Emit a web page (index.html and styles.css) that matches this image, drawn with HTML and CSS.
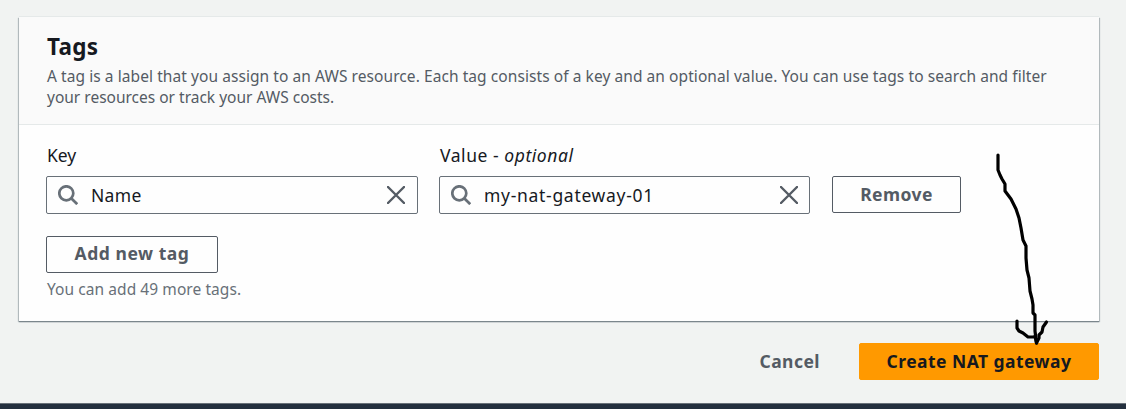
FILE: index.html
```html
<!DOCTYPE html>
<html lang="en">
<head>
<meta charset="utf-8">
<title>Create NAT gateway</title>
<link rel="stylesheet" href="styles.css">
</head>
<body>
<main class="page">
  <section class="panel">
    <header class="panel-header">
      <h2 class="title"><span>Tags</span></h2>
      <p class="description"><span class="desc-first">A tag is a label that you assign to an AWS resource. Each tag consists of a key and an optional value. You can use tags to search and filter</span><br><span class="desc-second">your resources or track your AWS costs.</span></p>
    </header>
    <div class="panel-body">
      <div class="tag-row">
        <div class="field">
          <label class="label label-key">Key</label>
          <div class="input">
            <svg class="search" viewBox="0 0 20 20"><circle cx="8.3" cy="8.3" r="7"/><path d="M13.2 13.2 19.2 19.2"/></svg>
            <span class="value value-key">Name</span>
            <svg class="clear" viewBox="0 0 18 18"><path d="M1 1 17 17M17 1 1 17"/></svg>
          </div>
        </div>
        <div class="field">
          <label class="label label-value">Value - <em>optional</em></label>
          <div class="input input-value">
            <svg class="search" viewBox="0 0 20 20"><circle cx="8.3" cy="8.3" r="7"/><path d="M13.2 13.2 19.2 19.2"/></svg>
            <span class="value value-name">my-nat-gateway-01</span>
            <svg class="clear" viewBox="0 0 18 18"><path d="M1 1 17 17M17 1 1 17"/></svg>
          </div>
        </div>
        <button class="button remove"><span>Remove</span></button>
      </div>
      <button class="button add"><span>Add new tag</span></button>
      <p class="hint"><span>You can add 49 more tags.</span></p>
    </div>
  </section>
  <div class="actions">
    <button class="button cancel"><span>Cancel</span></button>
    <button class="button primary"><span>Create NAT gateway</span></button>
  </div>
</main>
<footer class="footer"></footer>
<svg class="arrow" viewBox="0 0 60 196"><path d="M8 5V20L10 25L12 29L15 34V41L21 49L26 59L29 68L31 78L33 90L36 96V108L37 120L39 128L40 141L42 149L43 155V163L45 165V181L46.500 193"/><path d="M27 171V178L29 181L33 183L38 187H45"/><path d="M56.500 172L53 177L52 182L49 185V188L46.500 193L45 186"/></svg>
</body>
</html>
```
FILE: styles.css
```css
* { box-sizing: border-box; }
body {
  margin: 0;
  height: 409px;
  overflow: hidden;
  display: flex;
  flex-direction: column;
  background: #f1f3f2;
  color: #16191f;
  font-family: "Noto Sans", "Open Sans", sans-serif;
  font-size: 17.5px;
}
h2, p { margin: 0; font-weight: 400; }
.page { flex: 1; padding: 17px 27px 0 19px; }
.panel {
  height: 304px;
  background: #fefefe;
  box-shadow: 0 -1px 0 #e5e9e9, 0 1px 1px #7b868c, 1px 1px 1px #bcc3c6, -1px 1px 1px #bcc3c6;
}
.panel-header {
  height: 108px;
  padding: 16px 28px 0;
  background: #fafafa;
  border-bottom: 1px solid #e5e9e9;
}
.title { font-size: 22.5px; font-weight: 700; line-height: 28px; letter-spacing: .3px; }
.description { margin-top: 5px; font-size: 15.5px; line-height: 21px; color: #545b64; white-space: nowrap; }
.desc-first { letter-spacing: .07px; }
.panel-body { padding: 18px 27px 0; }
.tag-row { display: flex; align-items: flex-end; gap: 21px; }
.field { width: 372px; }
.field + .field { width: 371px; }
.label { display: block; padding-left: 1px; line-height: 24px; }
.label-value { letter-spacing: .55px; }
.input {
  height: 38px;
  margin-top: 9px;
  padding: 0 12px 0 11px;
  display: flex;
  align-items: center;
  border: 1px solid #687078;
  border-radius: 2px;
}
.input-value { padding-right: 11px; }
.search, .clear, .arrow { fill: none; }
.search { width: 20px; height: 20px; stroke: #687078; stroke-width: 2.7; }
.clear { width: 18px; height: 18px; stroke: #545b64; stroke-width: 2.4; stroke-linecap: round; }
.value { flex: 1; margin-left: 13px; }
.value-key { letter-spacing: .3px; }
.value-name { letter-spacing: .7px; }
.button {
  height: 37px;
  padding: 0;
  border: 1px solid #545b64;
  border-radius: 2px;
  background: transparent;
  color: #545b64;
  font: 700 17.5px/33px "Noto Sans", "Open Sans", sans-serif;
  letter-spacing: .45px;
  white-space: nowrap;
}
.remove { width: 129px; margin: 0 0 1px 1px; }
.add { display: block; width: 172px; margin-top: 22px; padding-bottom: 2px; line-height: 31px; letter-spacing: .55px; }
.hint { padding: 6px 0 0 1px; font-size: 15.5px; line-height: 21px; letter-spacing: .07px; color: #687078; }
.actions { display: flex; justify-content: flex-end; gap: 38px; margin-top: 22px; }
.cancel { border-color: transparent; }
.primary { width: 240px; background: #ff9900; border-color: #ff9900; color: #16191f; }
.footer { height: 6px; background: #232f3e; border-top: 1px solid #687078; }
.arrow {
  position: absolute;
  left: 990px;
  top: 150px;
  width: 60px;
  height: 196px;
  stroke: #000;
  stroke-width: 3.2;
  stroke-linecap: round;
  stroke-linejoin: round;
}
```
